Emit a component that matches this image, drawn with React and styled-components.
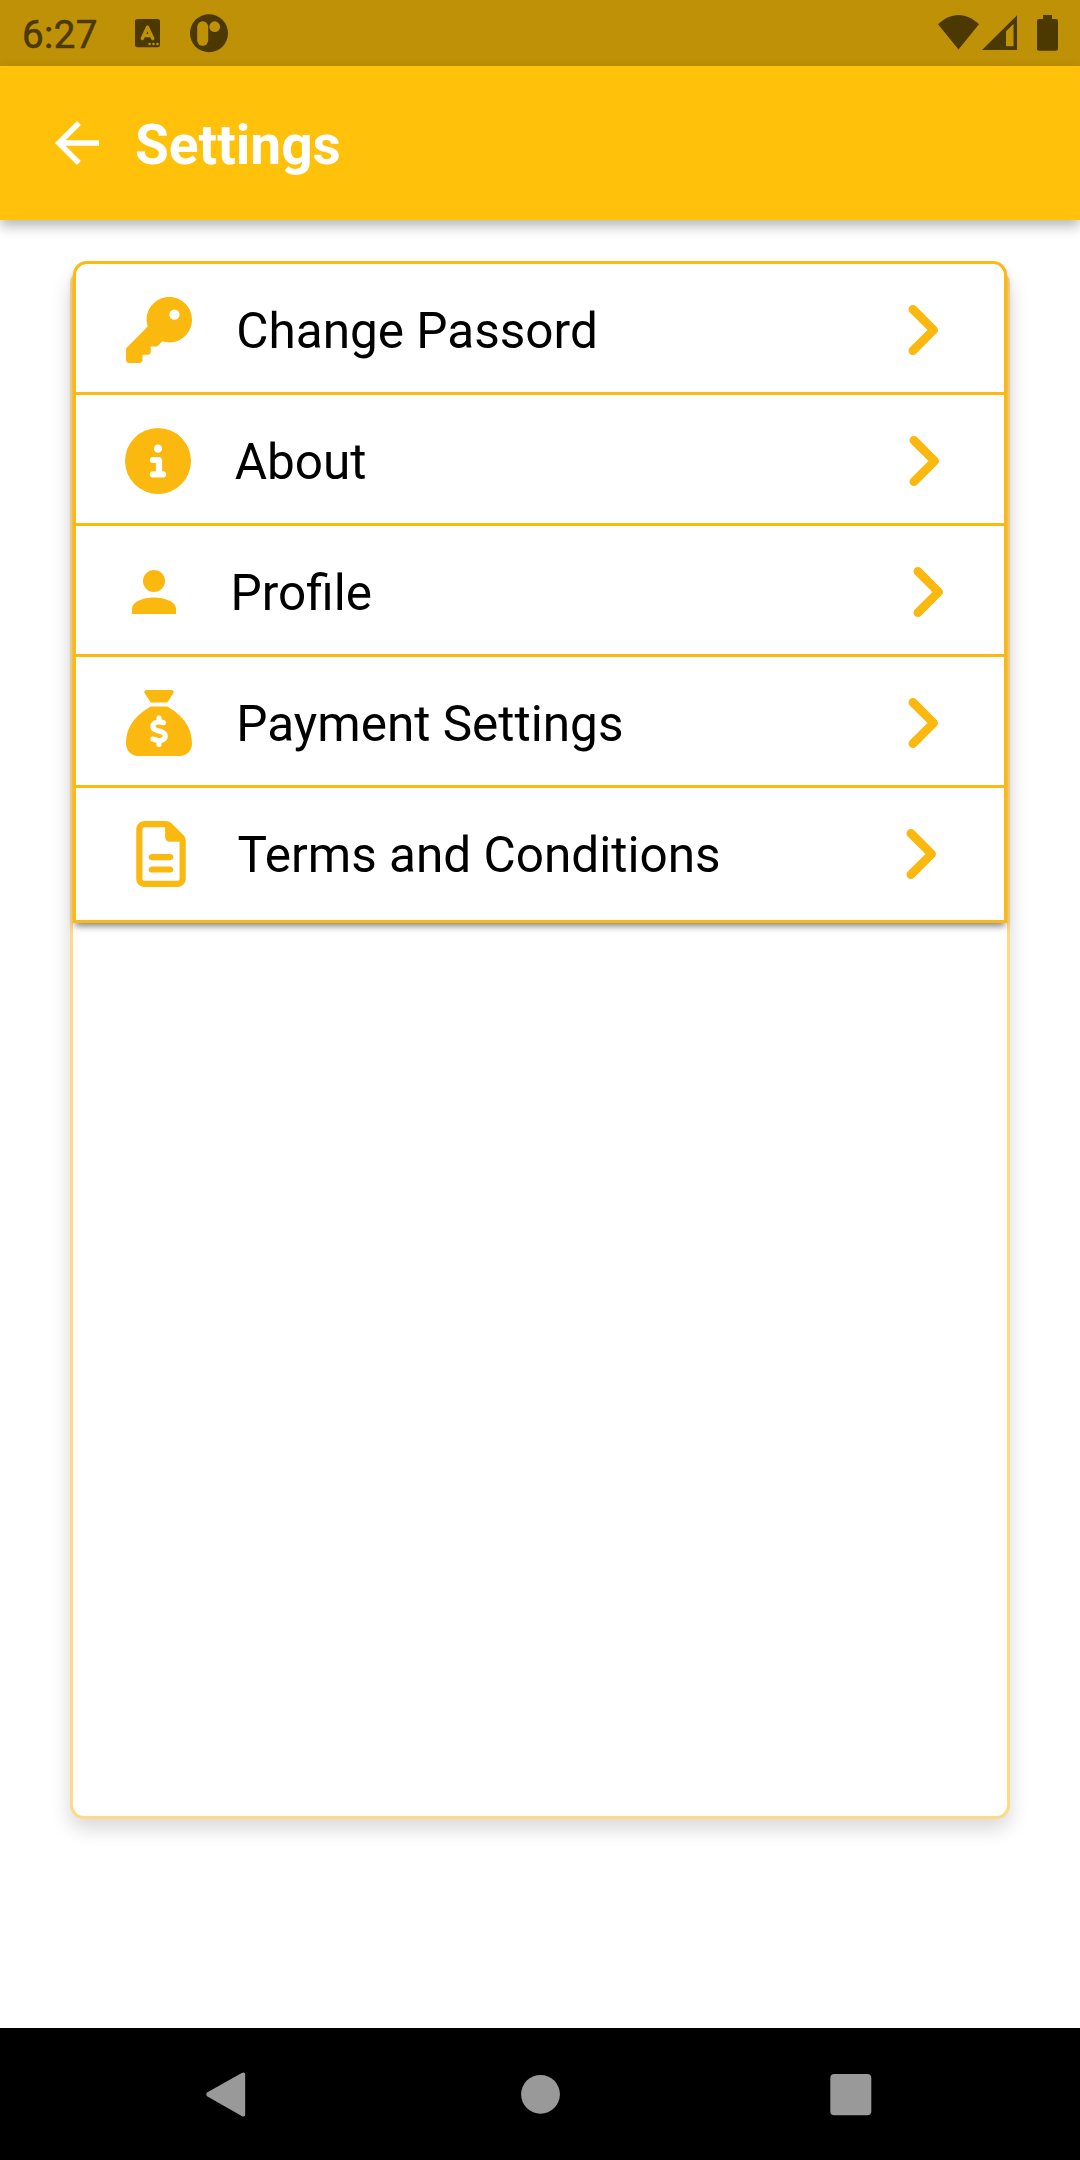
import React from "react";
import styled, { createGlobalStyle } from "styled-components";
import { FaKey, FaCircleInfo, FaSackDollar, FaRegFileLines } from "react-icons/fa6";

const GlobalStyle = createGlobalStyle`
  * { box-sizing: border-box; }
  body { margin: 0; background: #fff; font-family: Roboto, "Noto Sans", sans-serif; }
`;

const Screen = styled.div`
  display: flex;
  flex-direction: column;
  width: 1080px;
  height: 2160px;
  background: #fff;
  overflow: hidden;
`;

const StatusBar = styled.div`
  display: flex;
  align-items: center;
  justify-content: space-between;
  flex: none;
  height: 66px;
  padding: 0 22px;
  background: #bf9106;
  color: #4c3902;
`;

const StatusGroup = styled.div`
  display: flex;
  align-items: center;
`;

const Clock = styled.span`
  width: 113px;
  font-size: 38.5px;
  font-weight: 400;
  letter-spacing: 0.4px;
  line-height: 46px;
  padding-top: 3px;
  -webkit-text-stroke: 0.6px currentColor;
`;

const StatusIcon = styled.svg`
  display: block;
  flex: none;
  width: ${(p) => p.$w}px;
  height: 66px;
  margin-left: ${(p) => p.$gap || 0}px;
`;

const AppBar = styled.header`
  display: flex;
  align-items: center;
  flex: none;
  height: 154px;
  padding-left: 44px;
  background: #ffc109;
  box-shadow: 0 6px 12px rgba(0, 0, 0, 0.29);
  color: #fff;
  z-index: 1;
`;

const BackIcon = styled.svg`
  display: block;
  width: 66px;
  height: 66px;
`;

const Title = styled.h1`
  margin: 3px 0 0 25px;
  font-size: 55px;
  font-weight: 700;
  line-height: 66px;
`;

const Content = styled.main`
  flex: 1;
  padding: 50px 70px 0;
`;

const Card = styled.section`
  display: flow-root;
  height: 1549px;
  border: 3px solid #ffd985;
  border-top: 0;
  border-radius: 14px;
  background: #fff;
  box-shadow: 0 9px 20px rgba(0, 0, 0, 0.16);
`;

const ItemList = styled.div`
  display: flex;
  flex-direction: column;
  margin-top: -9px;
  border-radius: 14px 14px 0 0;
  box-shadow: 0 5px 7px -2px rgba(0, 0, 0, 0.5);
`;

const Item = styled.button`
  display: flex;
  align-items: center;
  width: 934px;
  height: ${(p) => (p.$last ? 138 : 134)}px;
  margin: 0 0 ${(p) => (p.$last ? 0 : -3)}px;
  padding: ${(p) => (p.$last ? 0 : 4)}px ${(p) => p.$inset}px 0;
  border: 3px solid #fdb90e;
  border-radius: ${(p) => (p.$first ? "14px 14px 0 0" : "0")};
  background: #fff;
  color: #000;
  font-family: inherit;
  text-align: left;
`;

const ItemIcon = styled.span`
  display: flex;
  align-items: center;
  justify-content: center;
  flex: none;
  width: 66px;
  height: 66px;
  color: #fbb80f;
  font-size: 66px;

  svg { display: block; }
`;

const Label = styled.span`
  flex: 1;
  margin: 2px 0 0 44px;
  font-size: 49.5px;
  line-height: 60px;
  white-space: nowrap;
`;

const NavBar = styled.nav`
  display: flex;
  align-items: center;
  justify-content: space-between;
  flex: none;
  height: 132px;
  padding: 0 196px 0 193px;
  background: #000;
  color: #999;
`;

const NavIcon = styled.svg`
  display: block;
  width: 66px;
  height: 66px;
`;

const ProfileIcon = () => (
  <svg viewBox="0 0 24 24" width="66" height="66" fill="currentColor">
    <path d="M12 4a4 4 0 0 1 4 4 4 4 0 0 1-4 4 4 4 0 0 1-4-4 4 4 0 0 1 4-4m0 10c4.42 0 8 1.79 8 4v2H4v-2c0-2.210 3.580-4 8-4Z" />
  </svg>
);

const ChevronIcon = () => (
  <svg viewBox="0 0 66 66" width="66" height="66" fill="none" stroke="currentColor" strokeWidth="8.8" strokeLinecap="round" strokeLinejoin="round">
    <path d="M24.900 12.400 45.600 33 24.900 53.600" />
  </svg>
);

const items = [
  { label: "Change Passord", icon: <FaKey />, inset: 50.300 },
  { label: "About", icon: <FaCircleInfo />, inset: 48.7 },
  { label: "Profile", icon: <ProfileIcon />, inset: 44.6 },
  { label: "Payment Settings", icon: <FaSackDollar />, inset: 50.300 },
  { label: "Terms and Conditions", icon: <FaRegFileLines />, inset: 51.600 },
];

export default function App() {
  return (
    <Screen>
      <GlobalStyle />
      <StatusBar>
        <StatusGroup>
          <Clock>6:27</Clock>
          <StatusIcon $w={25} viewBox="0 0 25 66">
            <rect y="19" width="25" height="28.3" rx="2.500" fill="currentColor" />
            <path d="M7.300 38.500 12.500 27.300 17.700 38.500M9.500 35.500h6" fill="none" stroke="#bf9106" strokeWidth="3.400" strokeLinecap="round" strokeLinejoin="round" />
            <g fill="#bf9106">
              <circle cx="14.500" cy="44" r="1.3" />
              <circle cx="18.500" cy="44" r="1.3" />
              <circle cx="22.500" cy="44" r="1.3" />
            </g>
          </StatusIcon>
          <StatusIcon $w={38} $gap={29.7} viewBox="0 0 38 66">
            <circle cx="19" cy="33.300" r="19" fill="currentColor" />
            <rect x="7.200" y="21.300" width="11" height="24.500" rx="5.500" fill="#bf9106" />
            <circle cx="24.700" cy="26.700" r="5.400" fill="#bf9106" />
          </StatusIcon>
        </StatusGroup>
        <StatusGroup>
          <StatusIcon $w={41} viewBox="0 0 41 66">
            <path d="M20.500 49.500 0 24.300C6 18.500 13 15 20.500 15S35 18.500 41 24.300Z" fill="currentColor" />
          </StatusIcon>
          <StatusIcon $w={35} $gap={3} viewBox="0 0 35 66">
            <path fillRule="evenodd" d="M35 15.300V50H0ZM31.500 24 24 31.200V46.300H31.500Z" fill="currentColor" />
          </StatusIcon>
          <StatusIcon $w={21} $gap={20} viewBox="0 0 21 66">
            <path d="M6 15h9v4h4a2 2 0 0 1 2 2v27.700a2 2 0 0 1-2 2H2a2 2 0 0 1-2-2V21a2 2 0 0 1 2-2h4Z" fill="currentColor" />
          </StatusIcon>
        </StatusGroup>
      </StatusBar>
      <AppBar>
        <BackIcon viewBox="0 0 24 24" fill="currentColor">
          <path d="M20 11H7.830l5.590-5.590L12 4l-8 8 8 8 1.410-1.410L7.830 13H20v-2Z" />
        </BackIcon>
        <Title>Settings</Title>
      </AppBar>
      <Content>
        <Card>
          <ItemList>
            {items.map((item, i) => (
              <Item
                key={item.label}
                $inset={item.inset}
                $first={i === 0}
                $last={i === items.length - 1}
              >
                <ItemIcon>{item.icon}</ItemIcon>
                <Label>{item.label}</Label>
                <ItemIcon><ChevronIcon /></ItemIcon>
              </Item>
            ))}
          </ItemList>
        </Card>
      </Content>
      <NavBar>
        <NavIcon viewBox="0 0 66 66" fill="currentColor">
          <path d="M14.500 31.200 48.700 12q3.500-1.600 3.500 1.500v40q0 3-3.500 1.500L14.500 35.500Q12 33.300 14.500 31.200Z" />
        </NavIcon>
        <NavIcon viewBox="0 0 66 66" fill="currentColor">
          <circle cx="34.500" cy="33.300" r="19.400" />
        </NavIcon>
        <NavIcon viewBox="0 0 66 66" fill="currentColor">
          <rect x="12.300" y="13" width="41" height="41.300" rx="4" />
        </NavIcon>
      </NavBar>
    </Screen>
  );
}
